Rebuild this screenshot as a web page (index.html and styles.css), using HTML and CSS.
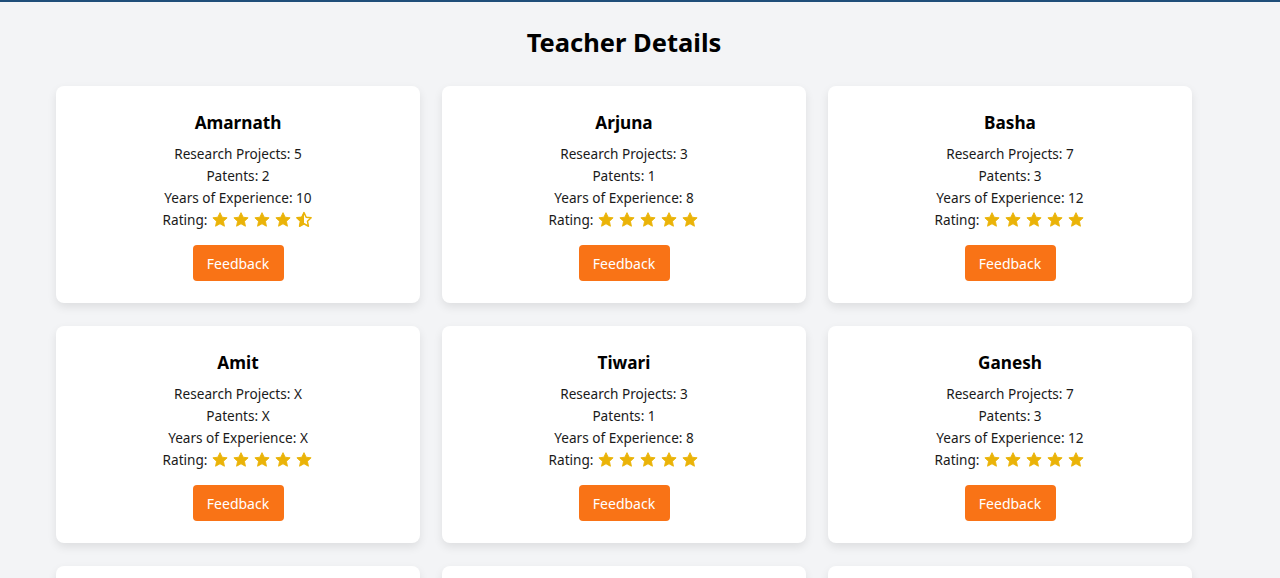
FILE: index.html
```html
<!DOCTYPE html>
<html lang="en">
<head>
<meta charset="utf-8">
<title>Teacher Details</title>
<link rel="stylesheet" href="styles.css">
</head>
<body>
<svg width="0" height="0" class="defs">
  <defs>
    <path id="star" d="M12 2.2l2.9 6.1 6.6.8-4.9 4.6 1.3 6.6L12 17l-5.9 3.3 1.3-6.6-4.9-4.6 6.6-.8z"/>
    <clipPath id="lefthalf"><rect x="0" y="0" width="12" height="24"/></clipPath>
  </defs>
</svg>
<main class="page">
  <h1 class="title">Teacher Details</h1>
  <section class="grid">
    <article class="card">
      <h2 class="name">Amarnath</h2>
      <p class="line">Research Projects: 5</p>
      <p class="line">Patents: 2</p>
      <p class="line">Years of Experience: 10</p>
      <p class="line rating">Rating: <span class="stars">
        <svg class="star" viewBox="0 0 24 24"><use href="#star"/></svg>
        <svg class="star" viewBox="0 0 24 24"><use href="#star"/></svg>
        <svg class="star" viewBox="0 0 24 24"><use href="#star"/></svg>
        <svg class="star" viewBox="0 0 24 24"><use href="#star"/></svg>
        <svg class="star half" viewBox="0 0 24 24"><use href="#star" class="outline"/><use href="#star" clip-path="url(#lefthalf)"/></svg>
      </span></p>
      <button class="btn">Feedback</button>
    </article>
    <article class="card">
      <h2 class="name">Arjuna</h2>
      <p class="line">Research Projects: 3</p>
      <p class="line">Patents: 1</p>
      <p class="line">Years of Experience: 8</p>
      <p class="line rating">Rating: <span class="stars">
        <svg class="star" viewBox="0 0 24 24"><use href="#star"/></svg>
        <svg class="star" viewBox="0 0 24 24"><use href="#star"/></svg>
        <svg class="star" viewBox="0 0 24 24"><use href="#star"/></svg>
        <svg class="star" viewBox="0 0 24 24"><use href="#star"/></svg>
        <svg class="star" viewBox="0 0 24 24"><use href="#star"/></svg>
      </span></p>
      <button class="btn">Feedback</button>
    </article>
    <article class="card">
      <h2 class="name">Basha</h2>
      <p class="line">Research Projects: 7</p>
      <p class="line">Patents: 3</p>
      <p class="line">Years of Experience: 12</p>
      <p class="line rating">Rating: <span class="stars">
        <svg class="star" viewBox="0 0 24 24"><use href="#star"/></svg>
        <svg class="star" viewBox="0 0 24 24"><use href="#star"/></svg>
        <svg class="star" viewBox="0 0 24 24"><use href="#star"/></svg>
        <svg class="star" viewBox="0 0 24 24"><use href="#star"/></svg>
        <svg class="star" viewBox="0 0 24 24"><use href="#star"/></svg>
      </span></p>
      <button class="btn">Feedback</button>
    </article>
    <article class="card">
      <h2 class="name">Amit</h2>
      <p class="line">Research Projects: X</p>
      <p class="line">Patents: X</p>
      <p class="line">Years of Experience: X</p>
      <p class="line rating">Rating: <span class="stars">
        <svg class="star" viewBox="0 0 24 24"><use href="#star"/></svg>
        <svg class="star" viewBox="0 0 24 24"><use href="#star"/></svg>
        <svg class="star" viewBox="0 0 24 24"><use href="#star"/></svg>
        <svg class="star" viewBox="0 0 24 24"><use href="#star"/></svg>
        <svg class="star" viewBox="0 0 24 24"><use href="#star"/></svg>
      </span></p>
      <button class="btn">Feedback</button>
    </article>
    <article class="card">
      <h2 class="name">Tiwari</h2>
      <p class="line">Research Projects: 3</p>
      <p class="line">Patents: 1</p>
      <p class="line">Years of Experience: 8</p>
      <p class="line rating">Rating: <span class="stars">
        <svg class="star" viewBox="0 0 24 24"><use href="#star"/></svg>
        <svg class="star" viewBox="0 0 24 24"><use href="#star"/></svg>
        <svg class="star" viewBox="0 0 24 24"><use href="#star"/></svg>
        <svg class="star" viewBox="0 0 24 24"><use href="#star"/></svg>
        <svg class="star" viewBox="0 0 24 24"><use href="#star"/></svg>
      </span></p>
      <button class="btn">Feedback</button>
    </article>
    <article class="card">
      <h2 class="name">Ganesh</h2>
      <p class="line">Research Projects: 7</p>
      <p class="line">Patents: 3</p>
      <p class="line">Years of Experience: 12</p>
      <p class="line rating">Rating: <span class="stars">
        <svg class="star" viewBox="0 0 24 24"><use href="#star"/></svg>
        <svg class="star" viewBox="0 0 24 24"><use href="#star"/></svg>
        <svg class="star" viewBox="0 0 24 24"><use href="#star"/></svg>
        <svg class="star" viewBox="0 0 24 24"><use href="#star"/></svg>
        <svg class="star" viewBox="0 0 24 24"><use href="#star"/></svg>
      </span></p>
      <button class="btn">Feedback</button>
    </article>
    <article class="card"><h2 class="name">&nbsp;</h2></article>
    <article class="card"><h2 class="name">&nbsp;</h2></article>
    <article class="card"><h2 class="name">&nbsp;</h2></article>
  </section>
</main>
</body>
</html>
```

FILE: styles.css
```css
html, body {
  margin: 0;
  padding: 0;
}
body {
  background: #f3f4f6;
  border-top: 2px solid #1f4e79;
  font-family: "Noto Sans", "Open Sans", sans-serif;
  color: #111;
}
.defs {
  position: absolute;
  width: 0;
  height: 0;
}
.page {
  width: 1136px;
  margin-left: 56px;
  padding-top: 22px;
}
.title {
  margin: 0 0 26px;
  text-align: center;
  font-size: 25.5px;
  line-height: 36px;
  font-weight: 700;
  color: #000;
}
.grid {
  display: grid;
  grid-template-columns: repeat(3, 364px);
  column-gap: 22px;
  row-gap: 23px;
}
.card {
  background: #fff;
  border-radius: 8px;
  box-shadow: 0 4px 10px rgba(0, 0, 0, 0.09);
  padding: 25px 24px 22px;
  display: flex;
  flex-direction: column;
  align-items: center;
  min-height: 170px;
}
.name {
  margin: 0 0 8px;
  font-size: 17.2px;
  line-height: 24px;
  font-weight: 700;
  color: #000;
}
.line {
  margin: 0;
  font-size: 13.6px;
  line-height: 22px;
  color: #1a1a1a;
}
.rating {
  display: flex;
  align-items: center;
}
.stars {
  display: inline-flex;
  gap: 3px;
  margin-left: 4px;
}
.star {
  width: 18px;
  height: 18px;
  fill: #eab308;
  stroke: #eab308;
  stroke-width: 1.2;
  stroke-linejoin: round;
}
.star .outline {
  fill: none;
  stroke-width: 2;
}
.btn {
  margin-top: 14px;
  width: 91px;
  height: 36px;
  border: none;
  border-radius: 4px;
  background: #f97316;
  color: #fff;
  font-family: "Noto Sans", "Open Sans", sans-serif;
  font-size: 14px;
  cursor: pointer;
}
```
